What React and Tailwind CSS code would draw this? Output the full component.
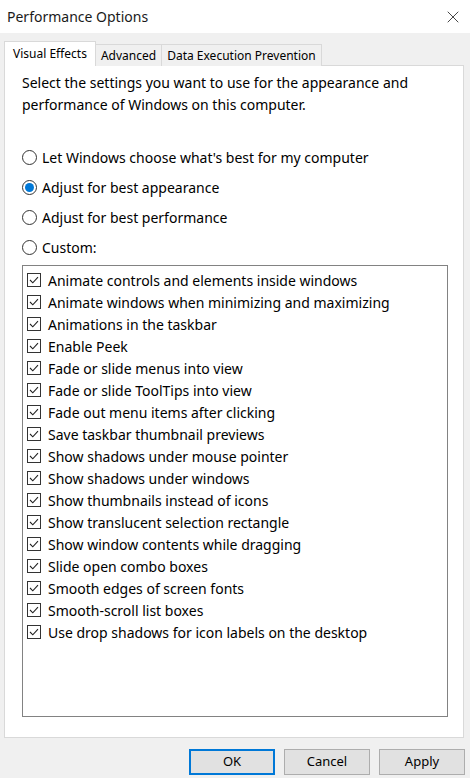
import { X } from 'lucide-react';

const effects = [
  'Animate controls and elements inside windows',
  'Animate windows when minimizing and maximizing',
  'Animations in the taskbar',
  'Enable Peek',
  'Fade or slide menus into view',
  'Fade or slide ToolTips into view',
  'Fade out menu items after clicking',
  'Save taskbar thumbnail previews',
  'Show shadows under mouse pointer',
  'Show shadows under windows',
  'Show thumbnails instead of icons',
  'Show translucent selection rectangle',
  'Show window contents while dragging',
  'Slide open combo boxes',
  'Smooth edges of screen fonts',
  'Smooth-scroll list boxes',
  'Use drop shadows for icon labels on the desktop',
];

const options = [
  { label: "Let Windows choose what's best for my computer", on: false },
  { label: 'Adjust for best appearance', on: true },
  { label: 'Adjust for best performance', on: false },
  { label: 'Custom:', on: false },
];

function Radio({ on }) {
  return (
    <span className="w-[15px] h-[15px] rounded-full border border-[#333] bg-white flex items-center justify-center shrink-0">
      {on && <span className="w-[9px] h-[9px] rounded-full bg-[#0078d7]" />}
    </span>
  );
}

function Check() {
  return (
    <span className="w-[14px] h-[14px] border border-[#333] bg-white flex items-center justify-center shrink-0">
      <svg width="10" height="8" viewBox="0 0 10 8" fill="none">
        <path d="M1 4 L3.8 6.8 L9 1.2" stroke="#222" strokeWidth="1.1" />
      </svg>
    </span>
  );
}

export default function App() {
  return (
    <div
      className="w-[470px] h-[778px] bg-[#f0f0f0] text-[#000] flex flex-col overflow-hidden"
      style={{ fontFamily: '"Noto Sans", "Open Sans", sans-serif' }}
    >
      {/* Title bar */}
      <div className="h-[33px] bg-white flex items-center justify-between pl-[7px] pr-[7px] shrink-0">
        <span className="text-[14px] text-[#1a1a1a]">Performance Options</span>
        <X size={20} strokeWidth={1} className="text-[#222]" />
      </div>

      {/* Tabs */}
      <div className="flex items-end pl-[4px] mt-[8px] h-[25px] text-[12px] relative z-10">
        <div className="h-[25px] px-[8px] bg-white border border-b-0 border-[#d9d9d9] flex items-center">Visual Effects</div>
        <div className="h-[22px] px-[5px] bg-[#f0f0f0] border border-l-0 border-b-0 border-[#d9d9d9] flex items-center">Advanced</div>
        <div className="h-[22px] px-[5px] bg-[#f0f0f0] border border-l-0 border-b-0 border-[#d9d9d9] flex items-center">Data Execution Prevention</div>
      </div>

      {/* Panel */}
      <div className="mx-[4px] mt-[-1px] w-[460px] h-[673px] bg-white border border-[#d9d9d9] flex flex-col px-[17px] pt-[6px] shrink-0">
        <p className="text-[14px] leading-[22px] text-[#000]">
          Select the settings you want to use for the appearance and performance of Windows on this computer.
        </p>

        <div className="flex flex-col mt-[30px] gap-[8px]">
          {options.map((o) => (
            <div key={o.label} className="flex items-center gap-[5px] h-[22px] text-[14px]">
              <Radio on={o.on} />
              <span>{o.label}</span>
            </div>
          ))}
        </div>

        <div className="mt-[7px] w-[426px] h-[452px] border border-[#828282] flex flex-col pt-[3px] pl-[4px] shrink-0">
          {effects.map((e) => (
            <div key={e} className="flex items-center gap-[7px] h-[22px] text-[14px]">
              <Check />
              <span>{e}</span>
            </div>
          ))}
        </div>
      </div>

      {/* Buttons */}
      <div className="flex justify-end gap-[9px] pr-[5px] mt-[11px]">
        <button className="w-[86px] h-[26px] bg-[#e1e1e1] border-2 border-[#0078d7] text-[13px]">OK</button>
        <button className="w-[86px] h-[26px] bg-[#e1e1e1] border border-[#adadad] text-[13px]">Cancel</button>
        <button className="w-[86px] h-[26px] bg-[#e1e1e1] border border-[#adadad] text-[13px]">Apply</button>
      </div>
    </div>
  );
}
